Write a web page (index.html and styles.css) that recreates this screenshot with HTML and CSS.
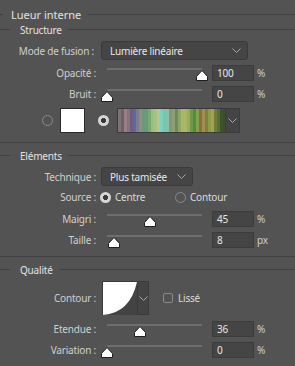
FILE: index.html
```html
<!DOCTYPE html>
<html lang="fr">
<head>
<meta charset="utf-8">
<title>Lueur interne</title>
<link rel="stylesheet" href="styles.css">
</head>
<body>
<div class="panel">
  <div class="legend main">Lueur interne</div>
  <div class="legend sub">Structure</div>

  <div class="row r-mode">
    <div class="label">Mode de fusion :</div>
    <div class="select wide"><span>Lumière linéaire</span><svg class="chev" width="9" height="5" viewBox="0 0 9 5"><path d="M0.5 0.5 L4.5 4.5 L8.5 0.5" fill="none" stroke="#a8a8a8"/></svg></div>
  </div>

  <div class="row srow r-opa">
    <div class="label">Opacité :</div>
    <div class="slider"><div class="track"></div><svg class="thumb" style="left:calc(100% - 6px)" width="12" height="11" viewBox="0 0 12 11"><path d="M6 0.5 L11.5 6.5 L11.5 10.5 L0.5 10.5 L0.5 6.5 Z" fill="#fff" stroke="#1e1e1e" stroke-linejoin="round"/></svg></div>
    <div class="num">100</div><div class="unit">%</div>
  </div>

  <div class="row srow r-bruit">
    <div class="label">Bruit :</div>
    <div class="slider"><div class="track"></div><svg class="thumb" style="left:calc(0% - 6px)" width="12" height="11" viewBox="0 0 12 11"><path d="M6 0.5 L11.5 6.5 L11.5 10.5 L0.5 10.5 L0.5 6.5 Z" fill="#fff" stroke="#1e1e1e" stroke-linejoin="round"/></svg></div>
    <div class="num">0</div><div class="unit">%</div>
  </div>

  <div class="row r-color">
    <span class="radio"></span>
    <span class="swatch"></span>
    <span class="radio on"></span>
    <div class="gradpick"><span class="grad"></span><span class="arrow"><svg width="9" height="5" viewBox="0 0 9 5"><path d="M0.5 0.5 L4.5 4.5 L8.5 0.5" fill="none" stroke="#a8a8a8"/></svg></span></div>
  </div>

  <div class="sep s1"></div>
  <div class="legend sub">Eléments</div>

  <div class="row r-tech">
    <div class="label">Technique :</div>
    <div class="select narrow"><span>Plus tamisée</span><svg class="chev" width="9" height="5" viewBox="0 0 9 5"><path d="M0.5 0.5 L4.5 4.5 L8.5 0.5" fill="none" stroke="#a8a8a8"/></svg></div>
  </div>

  <div class="row r-source">
    <div class="label">Source :</div>
    <div class="opt first"><span class="radio on"></span><span class="opt-text">Centre</span></div>
    <div class="opt"><span class="radio"></span><span class="opt-text">Contour</span></div>
  </div>

  <div class="row srow r-maigri">
    <div class="label">Maigri :</div>
    <div class="slider"><div class="track"></div><svg class="thumb" style="left:calc(45% - 6px)" width="12" height="11" viewBox="0 0 12 11"><path d="M6 0.5 L11.5 6.5 L11.5 10.5 L0.5 10.5 L0.5 6.5 Z" fill="#fff" stroke="#1e1e1e" stroke-linejoin="round"/></svg></div>
    <div class="num">45</div><div class="unit">%</div>
  </div>

  <div class="row srow r-taille">
    <div class="label">Taille :</div>
    <div class="slider"><div class="track"></div><svg class="thumb" style="left:calc(7.5% - 6px)" width="12" height="11" viewBox="0 0 12 11"><path d="M6 0.5 L11.5 6.5 L11.5 10.5 L0.5 10.5 L0.5 6.5 Z" fill="#fff" stroke="#1e1e1e" stroke-linejoin="round"/></svg></div>
    <div class="num">8</div><div class="unit">px</div>
  </div>

  <div class="sep s2"></div>
  <div class="legend sub">Qualité</div>

  <div class="row r-contour">
    <div class="label">Contour :</div>
    <div class="curvepick">
      <svg class="curve" width="34" height="33" viewBox="0 0 34 33"><rect width="34" height="33" fill="#fff"/><path d="M0 33 Q27 31 34 0 L34 33 Z" fill="#434343"/></svg>
      <span class="arrow"><svg width="9" height="5" viewBox="0 0 9 5"><path d="M0.5 0.5 L4.5 4.5 L8.5 0.5" fill="none" stroke="#a8a8a8"/></svg></span>
    </div>
    <span class="check"></span><span class="check-text">Lissé</span>
  </div>

  <div class="row srow r-etendue">
    <div class="label">Etendue :</div>
    <div class="slider"><div class="track"></div><svg class="thumb" style="left:calc(35% - 6px)" width="12" height="11" viewBox="0 0 12 11"><path d="M6 0.5 L11.5 6.5 L11.5 10.5 L0.5 10.5 L0.5 6.5 Z" fill="#fff" stroke="#1e1e1e" stroke-linejoin="round"/></svg></div>
    <div class="num">36</div><div class="unit">%</div>
  </div>

  <div class="row srow r-variation">
    <div class="label">Variation :</div>
    <div class="slider"><div class="track"></div><svg class="thumb" style="left:calc(0% - 6px)" width="12" height="11" viewBox="0 0 12 11"><path d="M6 0.5 L11.5 6.5 L11.5 10.5 L0.5 10.5 L0.5 6.5 Z" fill="#fff" stroke="#1e1e1e" stroke-linejoin="round"/></svg></div>
    <div class="num">0</div><div class="unit">%</div>
  </div>
</div>
</body>
</html>
```

FILE: styles.css
```css
html, body {
  margin: 0;
  padding: 0;
}
body {
  width: 295px;
  height: 366px;
  overflow: hidden;
  background: #535353;
  color: #cfcfcf;
  font-family: "Noto Sans", "DejaVu Sans", sans-serif;
  font-size: 10px;
  letter-spacing: -0.2px;
}
.panel {
  padding-top: 7px;
}
.legend {
  display: flex;
  align-items: center;
  height: 15px;
  color: #e2e2e2;
  white-space: nowrap;
}
.legend::before,
.legend::after {
  content: "";
  height: 1px;
  background: #404040;
}
.legend::after {
  flex: 1;
  margin-left: 6px;
}
.legend.main {
  font-size: 11px;
  letter-spacing: 0;
}
.legend.main::before {
  width: 3px;
  margin-right: 8px;
}
.legend.sub::before {
  width: 10px;
  margin-right: 10px;
}
.sep {
  height: 1px;
  background: #404040;
}
.s1 { margin-top: 9px; }
.s2 { margin-top: 8px; }
.s1 + .legend,
.s2 + .legend { margin-top: 5px; }

.row {
  display: flex;
  align-items: center;
}
.label {
  width: 96px;
  flex: none;
  text-align: right;
  white-space: nowrap;
}
.r-mode .label { width: 94px; margin-right: 2px; }
.r-mode { margin-top: 4px; height: 19px; }
.r-opa { margin-top: 5px; }
.r-bruit { margin-top: 5px; }
.r-color { margin-top: 6px; height: 25px; padding-left: 42px; }
.r-tech { margin-top: 4px; height: 19px; }
.r-source { margin-top: 4px; height: 14px; }
.r-maigri { margin-top: 7px; }
.r-taille { margin-top: 5px; }
.r-contour { margin-top: 4px; height: 34px; }
.r-etendue { margin-top: 6px; }
.r-variation { margin-top: 5px; }

.srow { height: 16px; }

.select {
  box-sizing: border-box;
  height: 19px;
  margin-left: 5px;
  background: #454545;
  border: 1px solid #3a3a3a;
  border-radius: 3px;
  display: flex;
  align-items: center;
  justify-content: space-between;
  padding: 0 6px 0 8px;
  color: #e8e8e8;
}
.select.wide { width: 147px; }
.select.narrow { width: 92px; }
.chev { flex: none; }

.slider {
  position: relative;
  width: 95px;
  margin-left: 11px;
  align-self: stretch;
  flex: none;
}
.track {
  height: 2px;
  margin-top: 3px;
  background: #6e6e6e;
}
.thumb {
  position: absolute;
  top: 5px;
}
.num {
  box-sizing: border-box;
  width: 42px;
  height: 16px;
  margin-left: 10px;
  padding-left: 4px;
  background: #454545;
  border: 1px solid #3c3c3c;
  color: #e8e8e8;
  line-height: 14px;
  flex: none;
}
.unit {
  margin-left: 3px;
  color: #cfcfcf;
}

.radio {
  box-sizing: border-box;
  width: 11px;
  height: 11px;
  border-radius: 50%;
  border: 1px solid #8a8a8a;
  flex: none;
}
.radio.on {
  border: none;
  background: radial-gradient(circle, #3a3a3a 0 2.3px, #d6d6d6 2.8px);
}
.swatch {
  box-sizing: border-box;
  width: 25px;
  height: 25px;
  margin-left: 7px;
  background: #fff;
  border: 1px solid #2a2a2a;
  flex: none;
}
.r-color .radio.on { margin-left: 13px; }
.gradpick {
  display: flex;
  margin-left: 8px;
  height: 25px;
  box-sizing: border-box;
  border: 1px solid #3a3a3a;
}
.grad {
  width: 107px;
  background: linear-gradient(90deg,
    #7d7377 0 3px, #6e6163 3px 6px, #9a7f8a 6px 9px, #85717f 9px 12px,
    #6c5e86 12px 15px, #5f6a98 15px 18px, #807c90 18px 21px, #8c8f88 21px 24px,
    #6e9a72 24px 27px, #5f9e86 27px 30px, #79a96f 30px 33px, #9bbf7d 33px 36px,
    #a7c187 36px 39px, #b8c58c 39px 42px, #7cd2c2 42px 45px, #6fcab4 45px 48px,
    #8fbfa9 48px 51px, #7e9a7e 51px 54px, #909e70 54px 57px, #6a8c58 57px 60px,
    #8fa764 60px 63px, #a8b86a 63px 66px, #b0b365 66px 69px, #96ae58 69px 72px,
    #6d9a4a 72px 75px, #5e8744 75px 78px, #87a04c 78px 81px, #8b6e3c 81px 84px,
    #a48c55 84px 87px, #7b843f 87px 90px, #909a4a 90px 93px, #a7a24f 93px 96px,
    #6e7e3a 96px 99px, #55703a 99px 102px, #3c5130 102px 107px);
}
.arrow {
  width: 13px;
  background: #444;
  display: flex;
  align-items: center;
  justify-content: center;
  border-left: 1px solid #3a3a3a;
}

.opt {
  display: flex;
  align-items: center;
}
.opt.first {
  width: 75px;
  margin-left: 4px;
}
.opt-text {
  margin-left: 4px;
  color: #dadada;
}

.curvepick {
  display: flex;
  margin-left: 6px;
  height: 34px;
  box-sizing: border-box;
  border: 1px solid #3a3a3a;
}
.curve { display: block; }
.curvepick .arrow { width: 10px; }
.check {
  box-sizing: border-box;
  width: 10px;
  height: 10px;
  margin-left: 14px;
  border: 1px solid #8a8a8a;
  border-radius: 2px;
  flex: none;
}
.check-text {
  margin-left: 5px;
  color: #dadada;
}
```
